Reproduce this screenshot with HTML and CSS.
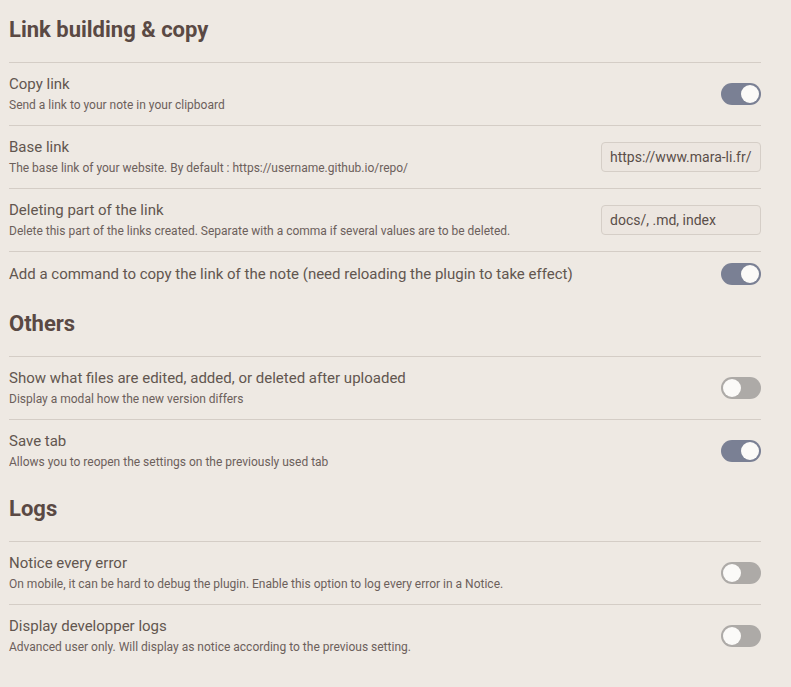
FILE: index.html
```html
<!DOCTYPE html>
<html lang="en">
<head>
<meta charset="utf-8">
<title>Settings</title>
<link rel="stylesheet" href="styles.css">
</head>
<body>
<div class="settings">
  <div class="heading">Link building &amp; copy</div>
  <div class="item">
    <div class="info">
      <div class="name">Copy link</div>
      <div class="desc">Send a link to your note in your clipboard</div>
    </div>
    <div class="toggle on"><span class="knob"></span></div>
  </div>
  <div class="item">
    <div class="info">
      <div class="name">Base link</div>
      <div class="desc">The base link of your website. By default : https://username.github.io/repo/</div>
    </div>
    <input class="field" type="text" value="https://www.mara-li.fr/">
  </div>
  <div class="item">
    <div class="info">
      <div class="name">Deleting part of the link</div>
      <div class="desc">Delete this part of the links created. Separate with a comma if several values are to be deleted.</div>
    </div>
    <input class="field" type="text" value="docs/, .md, index">
  </div>
  <div class="item">
    <div class="info">
      <div class="name">Add a command to copy the link of the note (need reloading the plugin to take effect)</div>
    </div>
    <div class="toggle on"><span class="knob"></span></div>
  </div>

  <div class="heading">Others</div>
  <div class="item">
    <div class="info">
      <div class="name">Show what files are edited, added, or deleted after uploaded</div>
      <div class="desc">Display a modal how the new version differs</div>
    </div>
    <div class="toggle"><span class="knob"></span></div>
  </div>
  <div class="item">
    <div class="info">
      <div class="name">Save tab</div>
      <div class="desc">Allows you to reopen the settings on the previously used tab</div>
    </div>
    <div class="toggle on"><span class="knob"></span></div>
  </div>

  <div class="heading">Logs</div>
  <div class="item">
    <div class="info">
      <div class="name">Notice every error</div>
      <div class="desc">On mobile, it can be hard to debug the plugin. Enable this option to log every error in a Notice.</div>
    </div>
    <div class="toggle"><span class="knob"></span></div>
  </div>
  <div class="item">
    <div class="info">
      <div class="name">Display developper logs</div>
      <div class="desc">Advanced user only. Will display as notice according to the previous setting.</div>
    </div>
    <div class="toggle"><span class="knob"></span></div>
  </div>
</div>
</body>
</html>
```
FILE: styles.css
```css
html, body {
  margin: 0;
  background: #eee9e3;
}
body {
  font-family: Roboto, "Liberation Sans", sans-serif;
  color: #5e524d;
}
.settings {
  padding: 3px 30px 20px 9px;
}
.heading {
  font-size: 22px;
  font-weight: 700;
  line-height: 24px;
  color: #5a4944;
  padding: 15px 0 20px;
}
.item {
  display: flex;
  align-items: center;
  justify-content: space-between;
  gap: 20px;
  border-top: 1px solid #d4cdc6;
  padding: 11px 0 12px;
}
.info {
  flex: 1;
  min-width: 0;
}
.name {
  font-size: 15px;
  line-height: 20px;
  color: #62564f;
}
.desc {
  font-size: 12px;
  line-height: 16px;
  margin-top: 3px;
  color: #6c605b;
}
.toggle {
  flex: none;
  width: 40px;
  height: 22px;
  border-radius: 11px;
  background: #adaaa7;
  display: flex;
  align-items: center;
  padding: 0 2px;
  box-sizing: border-box;
}
.toggle.on {
  background: #7a8094;
  justify-content: flex-end;
}
.knob {
  width: 18px;
  height: 18px;
  border-radius: 50%;
  background: #fbfaf8;
}
.field {
  flex: none;
  width: 160px;
  height: 30px;
  box-sizing: border-box;
  border: 1px solid #d5cec7;
  border-radius: 4px;
  background: #ece6e0;
  padding: 0 8px;
  font-family: Roboto, "Liberation Sans", sans-serif;
  font-size: 14px;
  color: #5a4e49;
  outline: none;
}
```
